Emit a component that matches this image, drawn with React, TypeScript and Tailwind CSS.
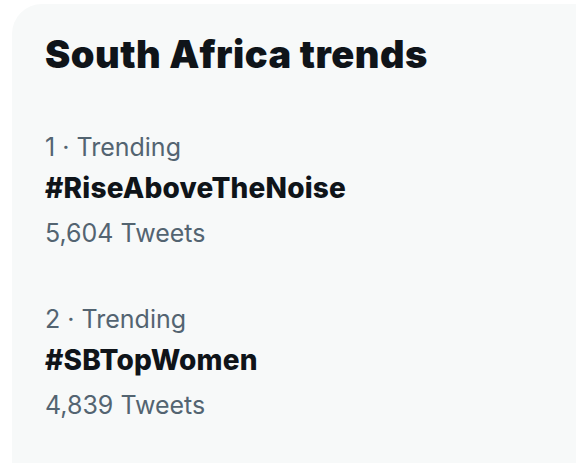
const trends = [
  { rank: 1, tag: '#RiseAboveTheNoise', count: '5,604' },
  { rank: 2, tag: '#SBTopWomen', count: '4,839' },
];

export default function App() {
  return (
    <div className="h-[463px] w-[576px] overflow-hidden bg-white pl-3 pt-1" style={{ fontFamily: 'Inter, "Noto Sans", sans-serif' }}>
      <div className="h-[520px] w-[620px] rounded-[30px] bg-[#f7f9f9]">
        {/* Header */}
        <div className="px-[33px] pb-[28px] pt-[28px]">
          <h2 className="text-[38px] font-black leading-[44px] tracking-[0.5px] text-[#0f1419]">South Africa trends</h2>
        </div>

        {/* Trend items */}
        {trends.map((t) => (
          <div key={t.rank} className="flex flex-col px-[33px] py-[27px]">
            <div className="text-[25px] leading-[32px] text-[#536471]">{t.rank} · Trending</div>
            <div className="mt-[7px] text-[28px] font-extrabold leading-[36px] tracking-[0.2px] text-[#0f1419]">{t.tag}</div>
            <div className="mt-[11px] text-[25px] leading-[32px] text-[#536471]">{t.count} Tweets</div>
          </div>
        ))}
      </div>
    </div>
  );
}
